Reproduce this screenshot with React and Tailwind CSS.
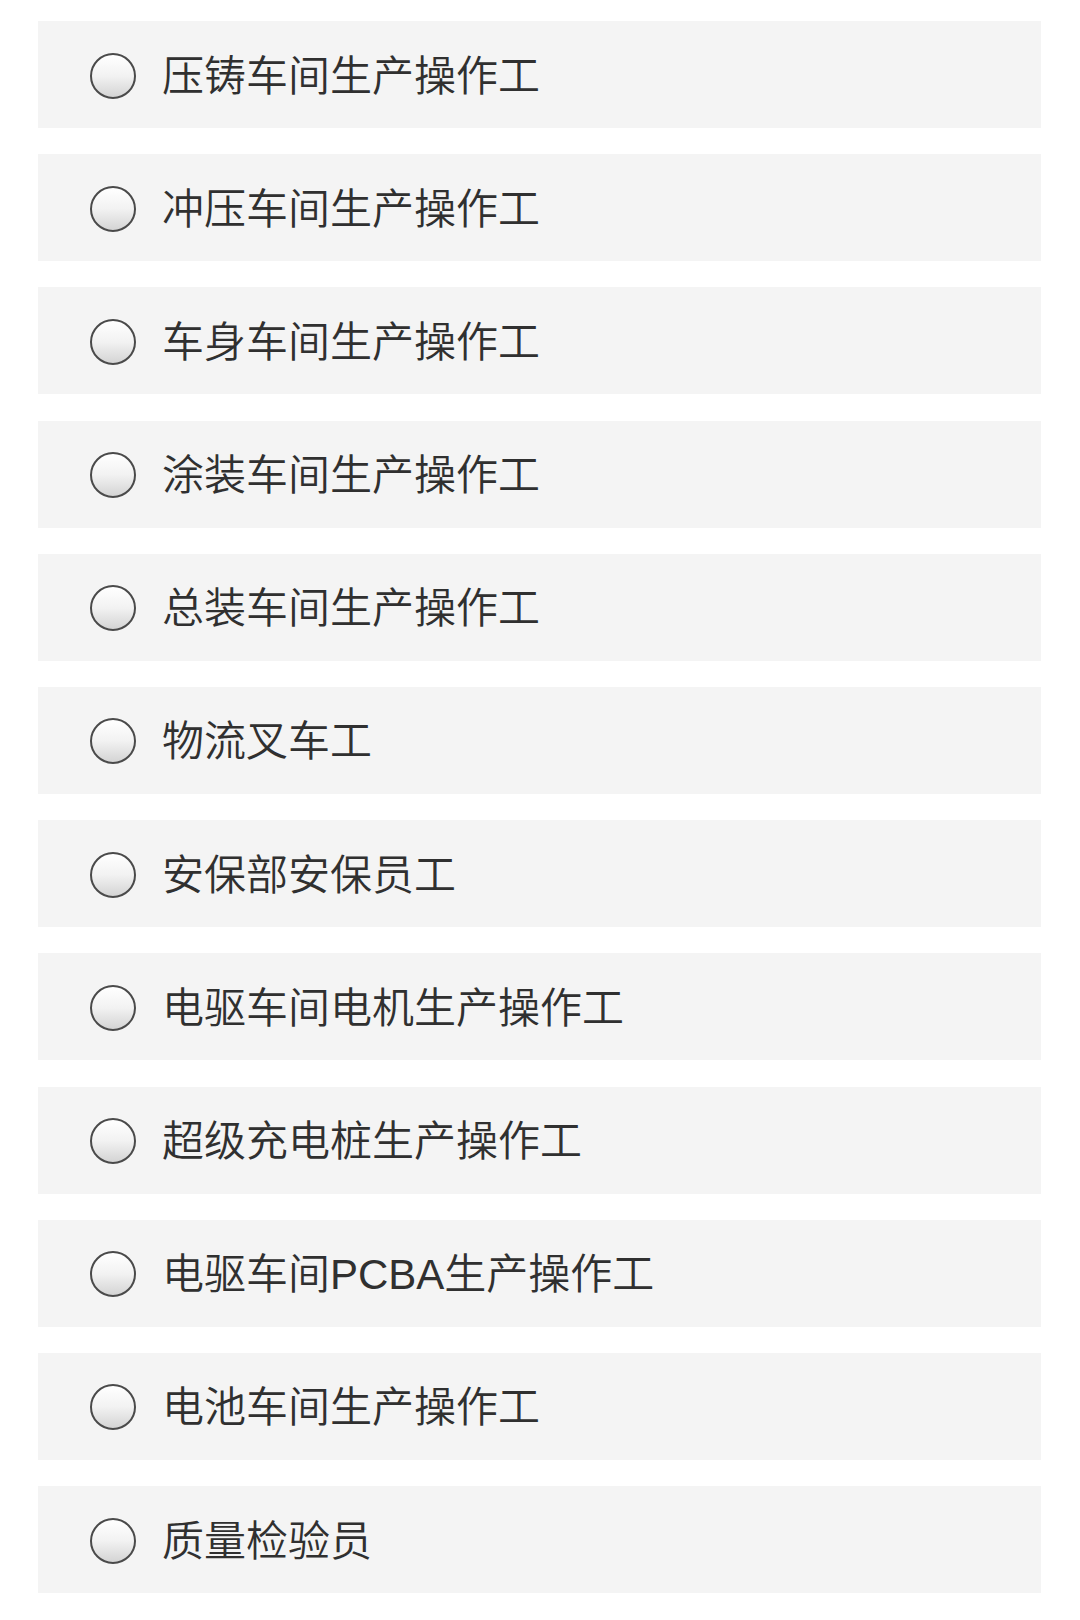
import React from "react";

const items = [
  "压铸车间生产操作工",
  "冲压车间生产操作工",
  "车身车间生产操作工",
  "涂装车间生产操作工",
  "总装车间生产操作工",
  "物流叉车工",
  "安保部安保员工",
  "电驱车间电机生产操作工",
  "超级充电桩生产操作工",
  "电驱车间PCBA生产操作工",
  "电池车间生产操作工",
  "质量检验员",
];

export default function App() {
  return (
    <div
      className="w-full min-h-[1620px] bg-white pt-[21px] pl-[38px] pr-[39px] flex flex-col gap-[26.2px]"
      style={{ fontFamily: '"Liberation Sans", "Noto Sans CJK SC", sans-serif' }}
    >
      {items.map((t) => (
        <div key={t} className="h-[107px] bg-[#f4f4f4] flex items-center pl-[52px]">
          <span className="mt-[2px] w-[46px] h-[46px] rounded-full border-[2.5px] border-[#4a4a4a] bg-gradient-to-b from-white via-[#f2f2f2] to-[#d4d4d4] shrink-0" />
          <span className="ml-[26px] mt-[4px] text-[42px] leading-none font-[350] text-[#303030]">{t}</span>
        </div>
      ))}
    </div>
  );
}
